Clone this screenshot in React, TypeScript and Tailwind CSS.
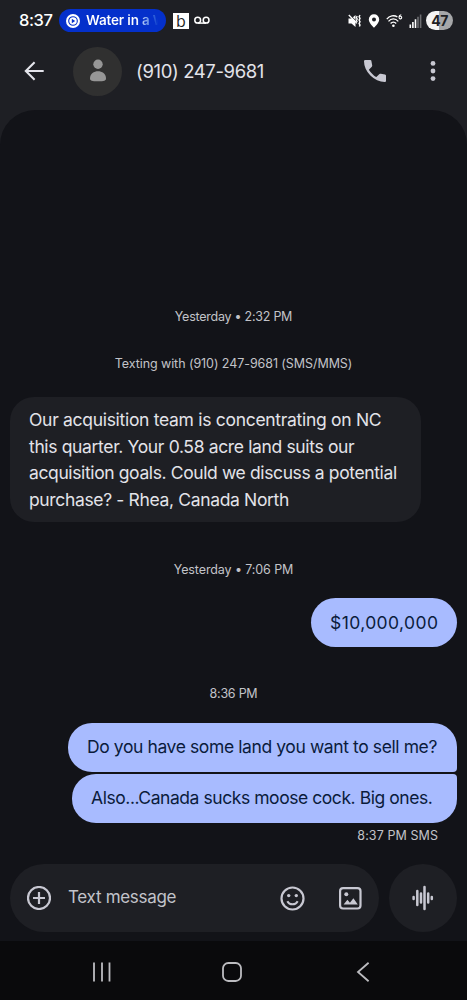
interface Line {
  text: string;
  tracking: string;
}

const received: Line[] = [
  { text: 'Our acquisition team is concentrating on NC', tracking: 'tracking-[-0.3px]' },
  { text: 'this quarter. Your 0.58 acre land suits our', tracking: 'tracking-[-0.35px]' },
  { text: 'acquisition goals. Could we discuss a potential', tracking: 'tracking-[-0.38px]' },
  { text: 'purchase? - Rhea, Canada North', tracking: 'tracking-[-0.35px]' },
];

function StatusBar() {
  return (
    <div className="flex h-[41px] shrink-0 items-center pl-[19px] pr-[14px] text-white">
      <span className="w-[40px] whitespace-nowrap text-[16.5px] font-medium tracking-[-0.4px]">8:37</span>
      <div className="flex h-[23px] w-[107px] items-center gap-[6px] rounded-full bg-[#0430cb] pl-[7px]">
        <svg width="14" height="14" viewBox="0 0 14 14" fill="none">
          <circle cx="7" cy="7" r="7" fill="white" />
          <circle cx="7" cy="7" r="4.3" stroke="#0430cb" strokeWidth="1.1" />
          <path d="M5.8 4.8 9.2 7 5.8 9.2Z" fill="#0430cb" />
        </svg>
        <span className="w-[72px] overflow-hidden whitespace-nowrap bg-linear-to-r from-white from-70% to-[#0430cb] bg-clip-text text-[13.5px] font-semibold tracking-[-0.15px] text-transparent">
          Water in a W
        </span>
      </div>
      <div className="ml-[7px] flex size-4 items-center justify-center bg-white font-['Open_Sans'] text-[16px] font-medium leading-4 text-[#1e1f24]">b</div>
      <svg className="ml-[5px]" width="16" height="9" viewBox="0 0 16 9" fill="none" stroke="white" strokeWidth="1.5">
        <circle cx="3.7" cy="4.2" r="2.9" />
        <circle cx="12.1" cy="4.2" r="2.9" />
        <path d="M3.7 7.1h8.4" />
      </svg>

      <div className="ml-auto flex items-center">
        {/* Muted with vibration */}
        <svg width="14" height="14" viewBox="0 0 14 14" fill="none" stroke="white">
          <path d="M0.5 4.5h3l4-3.5v12l-4-3.5h-3z" fill="white" stroke="none" />
          <path d="M1.6 .4 9.2 8" stroke="#1e1f24" strokeWidth="1" />
          <path d="M0.8 1 9 9.4" strokeWidth="1.3" />
          <path d="m9.2 2-.8 1.5.8 1.5-.8 1.5.8 1.5M12 1l-.9 1.7.9 1.7-.9 1.7.9 1.7-.9 1.6.9 1.7-.6 1.5" strokeWidth="1.4" />
        </svg>
        <svg className="ml-[6px]" width="12" height="14" viewBox="0 0 12 14">
          <path fillRule="evenodd" fill="white" d="M6 .3A5.1 5.1 0 0 0 .8 5.4C.8 9 6 13.7 6 13.7S11.2 9 11.2 5.4A5.1 5.1 0 0 0 6 .3Zm0 3.1a2 2 0 1 1 0 4 2 2 0 0 1 0-4Z" />
        </svg>
        <svg className="ml-[6px]" width="17" height="14" viewBox="0 0 17 14" fill="none" stroke="white" strokeWidth="1.3">
          <path d="M.8 5.2C3.4 1.6 8.3.8 11.4 3M2.5 7.4c2.7-3.3 7-3.3 9.8 0M4.6 9.5c1.6-1.9 4-1.9 5.6 0" />
          <circle cx="7.4" cy="11.8" r="1.3" fill="white" stroke="none" />
          <path d="M15.3.8c-1.8.2-2.5 1.5-2.2 3a1.3 1.3 0 1 0 .2-1" strokeWidth="1.1" />
        </svg>
        <svg className="ml-[6px]" width="13" height="14" viewBox="0 0 13 14">
          <path d="M.5 10.5h1.6V14H.5zM3.1 8h1.6v6H3.1zM5.7 5.2h1.6V14H5.7z" fill="white" />
          <path d="M8.2 2.8h1.6V14H8.2zM10.8.5h1.6V14h-1.6z" fill="#6d6e72" />
        </svg>
        <div className="ml-[4px] flex h-[19px] w-[27px] items-center justify-center rounded-full bg-linear-to-r from-[#f4f4f4] from-47% to-[#a6a7a9] to-47% text-[14px] font-bold tracking-[-0.6px] text-[#1e1f24]">
          47
        </div>
      </div>
    </div>
  );
}

function Header() {
  return (
    <div className="flex h-[69px] shrink-0 items-center pb-[9px] pl-6 pr-[24px]">
      <svg width="20" height="20" viewBox="0 0 20 20" fill="none" stroke="#e4e4eb" strokeWidth="2.1">
        <path d="M19.7 10H2M10.6 1.2 1.8 10l8.8 8.8" />
      </svg>
      <div className="ml-[29px] flex size-[49px] items-center justify-center rounded-full bg-[#303030]">
        <svg width="18" height="24" viewBox="0 0 18 24" fill="#969696">
          <circle cx="9" cy="5.3" r="4.7" />
          <path d="M1 19.5C1 14.5 5 12.2 9 12.2s8 2.3 8 7.3c0 2-1.7 2.8-8 2.8s-8-.8-8-2.8Z" />
        </svg>
      </div>
      <h1 className="ml-[14px] whitespace-nowrap pt-[2px] text-[18.5px] tracking-[-0.37px] text-[#e3e3e9]">(910) 247-9681</h1>
      <svg className="ml-auto" width="22" height="22" viewBox="3 3 18 18" fill="#c8c8d2">
        <path d="M19.95 21q-3.125 0-6.175-1.362t-5.55-3.863t-3.862-5.55T3 4.05q0-.45.3-.75t.75-.3H8.1q.35 0 .625.238t.325.562l.65 3.5q.05.4-.025.675T9.4 8.45L6.975 10.9q.5.925 1.187 1.787t1.513 1.663q.775.775 1.625 1.438T13.1 17l2.35-2.35q.225-.225.588-.338t.712-.062l3.45.7q.35.1.575.363T21 15.9v4.05q0 .45-.3.75t-.75.3" />
      </svg>
      <svg className="ml-[44px] mr-[7px]" width="6" height="20" viewBox="0 0 6 20" fill="#c8c8d2">
        <circle cx="3" cy="2.4" r="2.4" />
        <circle cx="3" cy="10" r="2.4" />
        <circle cx="3" cy="17.6" r="2.4" />
      </svg>
    </div>
  );
}

function Conversation() {
  return (
    <main className="flex h-[754px] shrink-0 flex-col rounded-t-[35px] bg-[#121318] px-[10px] pt-[197px] text-[17.5px] leading-[26.6px]">
      <p className="text-center text-[12.5px] leading-5 tracking-[-0.25px] text-[#c2c3c8]">Yesterday • 2:32 PM</p>
      <p className="mt-[27px] text-center text-[12.5px] leading-5 tracking-[-0.07px] text-[#c2c3c8]">Texting with (910) 247-9681 (SMS/MMS)</p>

      <div className="mt-[23px] h-[125px] w-[411px] rounded-[24px] bg-[#1e1f24] pl-[19px] pt-[10px] text-[#e3e3e9]">
        {received.map((line) => (
          <p key={line.text} className={`whitespace-nowrap ${line.tracking}`}>{line.text}</p>
        ))}
      </div>

      <p className="mt-[38px] text-center text-[12.5px] leading-5 tracking-[-0.1px] text-[#c2c3c8]">Yesterday • 7:06 PM</p>
      <div className="mt-[18px] flex h-[49px] w-[146px] items-center self-end whitespace-nowrap rounded-full bg-[#a8bbff] pl-[19px] text-[#0b1b3c]">
        <span className="pt-px tracking-[0.4px]">$10,000,000</span>
      </div>

      <p className="mt-[37px] text-center text-[12.5px] leading-5 tracking-[-0.25px] text-[#c2c3c8]">8:36 PM</p>
      <div className="mt-[19px] flex h-[49px] w-[389px] items-center self-end whitespace-nowrap rounded-[24px] rounded-br-[4px] bg-[#a8bbff] pl-[19px] text-[#0b1b3c]">
        <span className="tracking-[-0.4px]">Do you have some land you want to sell me?</span>
      </div>
      <div className="mt-[2px] flex h-[49px] w-[385px] items-center self-end whitespace-nowrap rounded-[24px] rounded-tr-[4px] bg-[#a8bbff] pl-[19px] text-[#0b1b3c]">
        <span className="tracking-[-0.44px]">Also...Canada sucks moose cock. Big ones.</span>
      </div>
      <p className="mt-[3px] pr-[19px] text-right text-[12.5px] leading-5 tracking-[0.08px] text-[#c2c3c8]">8:37 PM SMS</p>
    </main>
  );
}

function Composer() {
  return (
    <div className="flex h-[77px] shrink-0 gap-[10px] bg-[#121318] px-[10px]">
      <div className="flex h-[68px] w-[369px] items-center rounded-full bg-[#1e1f24] pl-[17px] pr-[17px]">
        <svg width="24" height="24" viewBox="0 0 24 24" fill="none" stroke="#c8c8d2" strokeWidth="2.2">
          <circle cx="12" cy="12" r="11" />
          <path d="M12 6v12M6 12h12" />
        </svg>
        <span className="ml-[17px] whitespace-nowrap text-[17px] tracking-[-0.3px] text-[#c2c3ca]">Text message</span>
        <svg className="ml-auto" width="25" height="25" viewBox="0 0 25 25" fill="none" stroke="#c8c8d2" strokeWidth="2.2">
          <circle cx="12.5" cy="12.5" r="11" />
          <path d="M7.3 15.2c2.2 4.1 8.2 4.1 10.4 0" strokeWidth="2" />
          <circle cx="8.7" cy="9.6" r="1.7" fill="#c8c8d2" stroke="none" />
          <circle cx="16.3" cy="9.6" r="1.7" fill="#c8c8d2" stroke="none" />
        </svg>
        <svg className="ml-[34px]" width="23" height="23" viewBox="0 0 23 23" fill="none">
          <rect x="1.1" y="1.1" width="20.4" height="20.4" rx="3" stroke="#c8c8d2" strokeWidth="2.2" />
          <circle cx="7.3" cy="7.3" r="2" fill="#c8c8d2" />
          <path d="M4.6 17.5 8.4 12.7 10.9 15.8 14.4 11.2 18.8 17.5Z" fill="#c8c8d2" />
        </svg>
      </div>
      <div className="flex size-[68px] items-center justify-center rounded-full bg-[#1e1f24]">
        <svg width="22" height="26" viewBox="0 0 22 26" stroke="#c8c8d2" strokeWidth="2.5" strokeLinecap="round">
          <path d="M1.6 12v2M5.3 6v14M9 8.5v9M12.5 2v22M16.2 8.5v9M19.8 12v2" />
        </svg>
      </div>
    </div>
  );
}

function NavBar() {
  return (
    <nav className="flex h-[59px] shrink-0 items-center bg-[#0a0a0c] pl-[92px] pt-[3px]">
      <svg width="20" height="20" viewBox="0 0 20 20" stroke="#bcbcc0" strokeWidth="1.8">
        <path d="M2 .5v19M10 .5v19M17.5 .5v19" />
      </svg>
      <svg className="ml-[110px]" width="20" height="20" viewBox="0 0 20 20" fill="none" stroke="#bcbcc0" strokeWidth="1.8">
        <rect x="1" y="1" width="18" height="18" rx="5.3" />
      </svg>
      <svg className="ml-[114px]" width="14" height="20" viewBox="0 0 14 20" fill="none" stroke="#bcbcc0" strokeWidth="1.8">
        <path d="M12.6 .8 2 10l10.6 9.2" />
      </svg>
    </nav>
  );
}

export default function App() {
  return (
    <div className="flex h-[1000px] w-[467px] flex-col overflow-hidden bg-[#1e1f24] font-['Inter','Liberation_Sans',sans-serif]">
      <StatusBar />
      <Header />
      <Conversation />
      <Composer />
      <NavBar />
    </div>
  );
}
